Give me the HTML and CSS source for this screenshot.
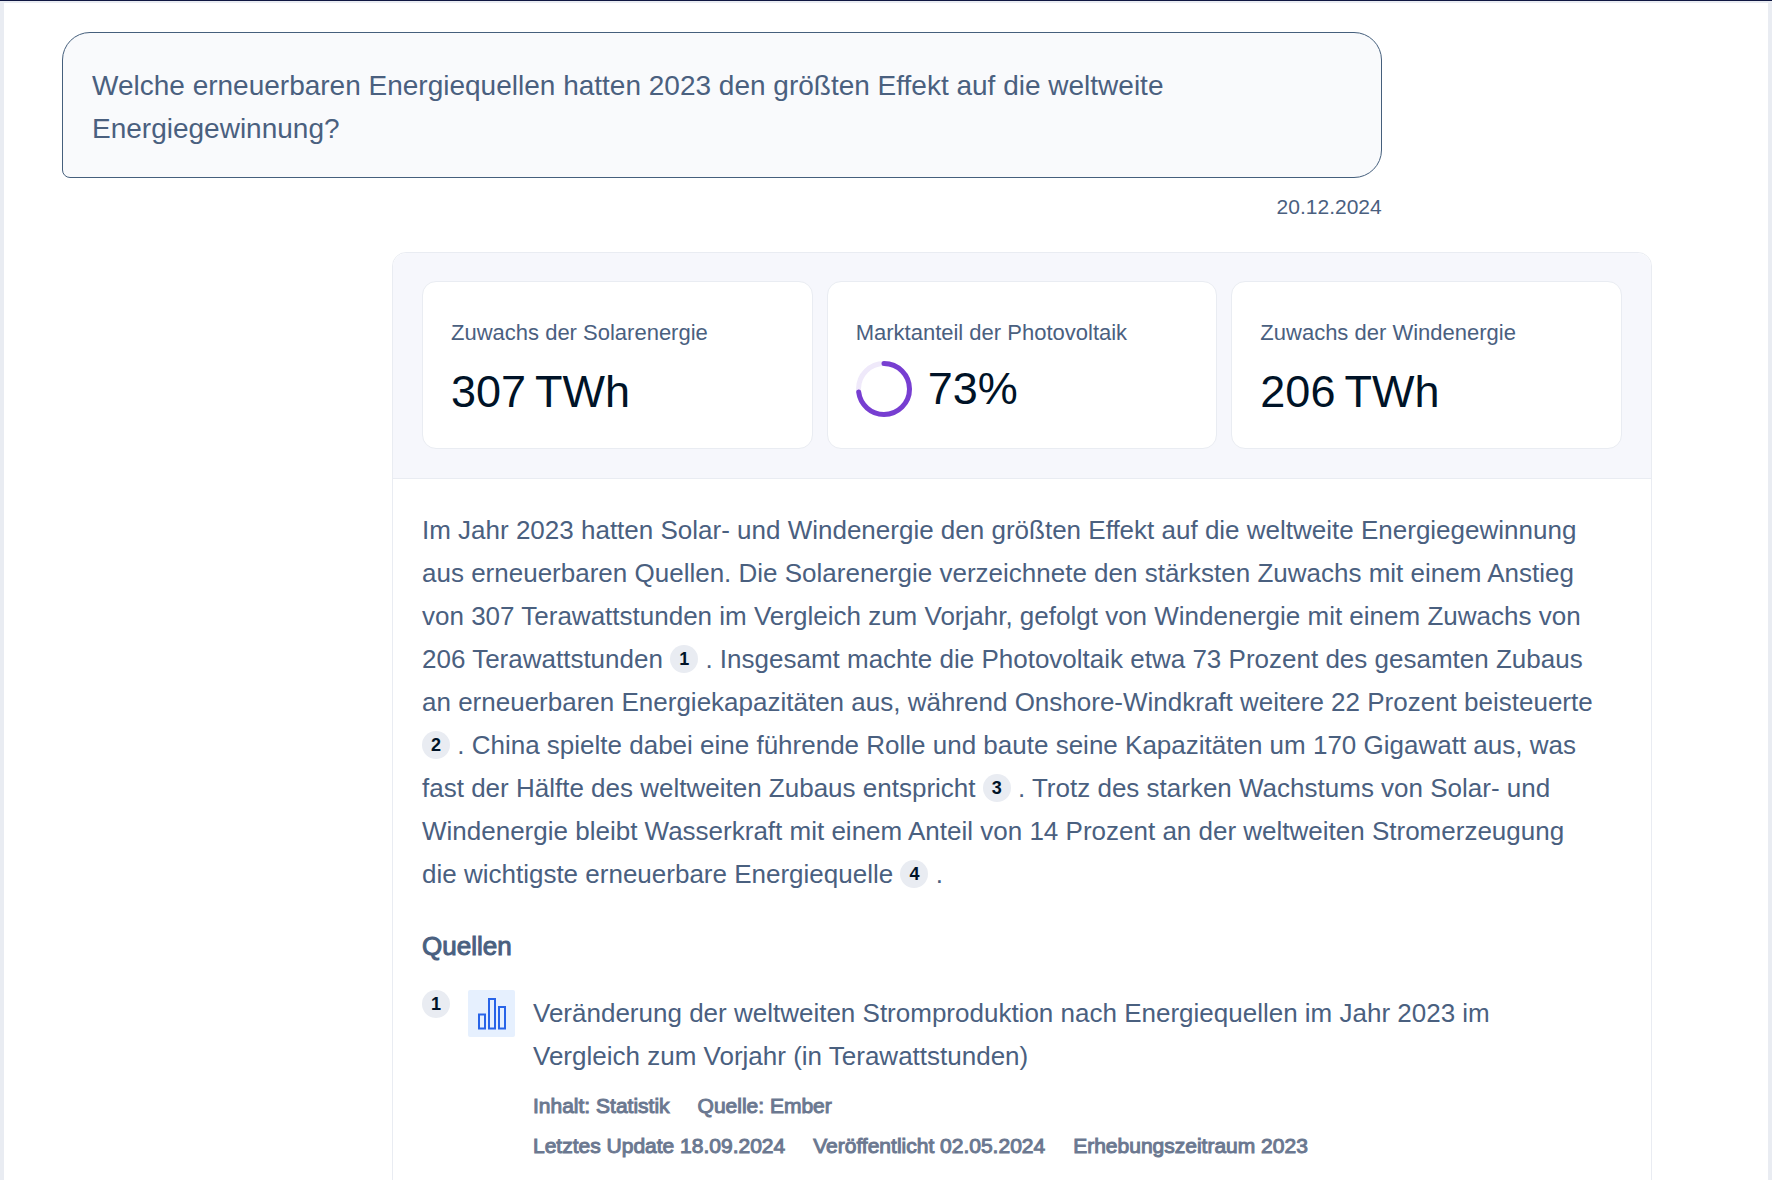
FILE: index.html
```html
<!DOCTYPE html>
<html lang="de">
<head>
<meta charset="UTF-8">
<meta name="viewport" content="width=device-width, initial-scale=1.0">
<title>Erneuerbare Energiequellen 2023</title>
<link rel="stylesheet" href="styles.css">
</head>
<body>
  <main class="chat">
    <section class="question">
      <p class="bubble">Welche erneuerbaren Energiequellen hatten 2023 den größten Effekt auf die weltweite Energiegewinnung?</p>
      <time class="date" datetime="2024-12-20">20.12.2024</time>
    </section>

    <article class="answer">
      <div class="stats">
        <div class="card">
          <div class="label">Zuwachs der Solarenergie</div>
          <div class="value">307&#8239;TWh</div>
        </div>
        <div class="card">
          <div class="label">Marktanteil der Photovoltaik</div>
          <div class="value share">
            <svg class="ring" viewBox="0 0 56 56" aria-hidden="true">
              <circle class="track" cx="28" cy="28" r="25.5"/>
              <circle class="progress" cx="28" cy="28" r="25.5" pathLength="100" stroke-dasharray="73 100" transform="rotate(-90 28 28)"/>
            </svg>
            <span>73%</span>
          </div>
        </div>
        <div class="card">
          <div class="label">Zuwachs der Windenergie</div>
          <div class="value">206&#8239;TWh</div>
        </div>
      </div>

      <div class="content">
        <p class="text">
          Im Jahr 2023 hatten Solar- und Windenergie den größten Effekt auf die weltweite Energiegewinnung<br>
          aus erneuerbaren Quellen. Die Solarenergie verzeichnete den stärksten Zuwachs mit einem Anstieg<br>
          von 307 Terawattstunden im Vergleich zum Vorjahr, gefolgt von Windenergie mit einem Zuwachs von<br>
          206 Terawattstunden <a href="#source1" class="badge">1</a> . Insgesamt machte die Photovoltaik etwa 73 Prozent des gesamten Zubaus<br>
          an erneuerbaren Energiekapazitäten aus, während Onshore-Windkraft weitere 22 Prozent beisteuerte<br>
          <a href="#source2" class="badge">2</a> . China spielte dabei eine führende Rolle und baute seine Kapazitäten um 170 Gigawatt aus, was<br>
          fast der Hälfte des weltweiten Zubaus entspricht <a href="#source3" class="badge">3</a> . Trotz des starken Wachstums von Solar- und<br>
          Windenergie bleibt Wasserkraft mit einem Anteil von 14 Prozent an der weltweiten Stromerzeugung<br>
          die wichtigste erneuerbare Energiequelle <a href="#source4" class="badge">4</a> .
        </p>

        <h2>Quellen</h2>
        <div class="source" id="source1">
          <span class="badge">1</span>
          <svg class="icon" viewBox="0 0 47 47" aria-hidden="true">
            <rect class="tile" width="47" height="47" rx="2"/>
            <path d="M11 24.5h6v14h-6zM21 9h6v29.5h-6zM31 17h6v21.5h-6z"/>
          </svg>
          <div class="source-info">
            <a href="#source1" class="source-title">Veränderung der weltweiten Stromproduktion nach Energiequellen im Jahr 2023 im<br>Vergleich zum Vorjahr (in Terawattstunden)</a>
            <div class="meta">
              <span>Inhalt: Statistik</span>
              <span>Quelle: Ember</span>
            </div>
            <div class="meta">
              <span>Letztes Update 18.09.2024</span>
              <span>Veröffentlicht 02.05.2024</span>
              <span>Erhebungszeitraum 2023</span>
            </div>
          </div>
        </div>
      </div>
    </article>
  </main>
</body>
</html>
```
FILE: styles.css
```css
* {
  box-sizing: border-box;
}
body {
  margin: 0;
  font-family: "Liberation Sans", Arial, sans-serif;
  color: #4a607f;
  background-color: #e9ecf2;
  border-top: 1px solid #0f1741;
}
.chat {
  min-height: 100vh;
  margin: 2px 4px 0;
  padding: 29px 116px 24px 58px;
  background-color: #fff;
}
.question {
  width: 83%;
}
.bubble {
  margin: 0;
  padding: 31px 29px 27px;
  font-size: 28px;
  line-height: 43px;
  background-color: #f9fafc;
  border: 1px solid #455f7c;
  border-radius: 28px 28px 28px 8px;
}
.date {
  display: block;
  margin-top: 16px;
  font-size: 21px;
  line-height: 26px;
  text-align: right;
}
.answer {
  width: calc(100% - 330px);
  margin: 32px 0 0 auto;
  border: 1px solid #e9ecf2;
  border-radius: 14px 14px 0 0;
}
.stats {
  display: grid;
  grid-template-columns: repeat(3, 1fr);
  gap: 14px;
  padding: 28px 29px 29px;
  background-color: #f6f7fc;
  border-bottom: 1px solid #e9ecf2;
  border-radius: 14px 14px 0 0;
}
.card {
  height: 168px;
  padding: 34px 28px 0;
  background-color: #fff;
  border: 1px solid #e9ecf2;
  border-radius: 14px;
}
.label {
  font-size: 22px;
  line-height: 34px;
}
.value {
  display: flex;
  align-items: center;
  height: 84px;
  font-size: 45px;
  color: #001327;
}
.share {
  gap: 16px;
  height: 78px;
}
.ring {
  width: 56px;
  height: 56px;
}
.ring circle {
  fill: none;
  stroke-width: 5;
}
.ring .track {
  stroke: #efe9fa;
}
.ring .progress {
  stroke: #773ed1;
  stroke-linecap: round;
}
.content {
  padding: 30px 29px;
}
.text {
  margin: 0;
  font-size: 26px;
  line-height: 43px;
}
.badge {
  display: inline-block;
  flex: none;
  width: 28px;
  height: 28px;
  font-size: 18px;
  font-weight: bold;
  line-height: 28px;
  text-align: center;
  text-decoration: none;
  vertical-align: 3px;
  color: #001327;
  background-color: #e9ecf2;
  border-radius: 50%;
}
h2 {
  margin: 29px 0 22px;
  font-size: 26px;
  font-weight: normal;
  line-height: 43px;
  -webkit-text-stroke: 1px;
}
.source {
  display: flex;
  align-items: flex-start;
  gap: 18px;
}
.icon {
  flex: none;
  width: 47px;
  height: 47px;
}
.icon .tile {
  fill: #e6f0fe;
}
.icon path {
  fill: none;
  stroke: #2864e8;
  stroke-width: 2;
}
.source-info {
  padding-top: 2px;
}
.source-title {
  display: block;
  margin-bottom: 8px;
  font-size: 26px;
  line-height: 43px;
  text-decoration: none;
  color: inherit;
}
.meta {
  display: flex;
  flex-wrap: wrap;
  gap: 0 28px;
  font-size: 21px;
  line-height: 40px;
  color: #6b7890;
  -webkit-text-stroke: 1px;
}
```
